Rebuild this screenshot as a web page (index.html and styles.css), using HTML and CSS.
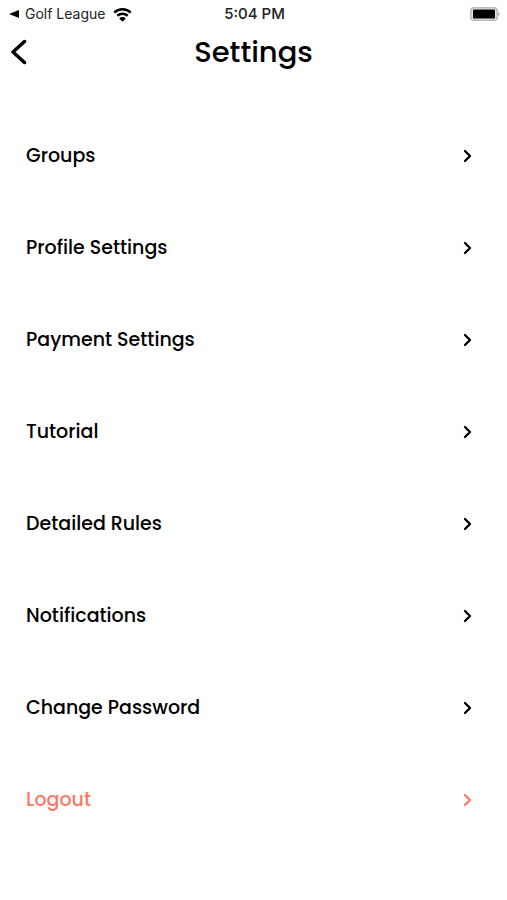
FILE: index.html
```
<!DOCTYPE html>
<html lang="en">
<head>
  <meta charset="utf-8">
  <meta name="viewport" content="width=device-width, initial-scale=1">
  <title>Settings</title>
  <link rel="stylesheet" href="styles.css">
</head>
<body>
  <div class="status-bar">
    <div class="status-left">
      <a class="back-to-app" href="#">
        <svg class="back-triangle" viewBox="0 0 10 8"><path d="M0 4 10 0v8z"/></svg>
        Golf League
      </a>
      <svg class="wifi" viewBox="0 0 18 14">
        <path class="wifi-arc" d="M1.2 5.2a11.2 11.2 0 0 1 15.6 0M4.1 8.2a7 7 0 0 1 9.8 0"/>
        <path d="M9 13.8 5.9 10.7a4.4 4.4 0 0 1 6.2 0z"/>
      </svg>
    </div>
    <div class="status-time">5:04 PM</div>
    <div class="status-right">
      <svg class="battery" viewBox="0 0 30 14">
        <rect class="battery-case" x="0" y="0" width="28" height="14" rx="4"/>
        <rect class="battery-gap" x="1.500" y="1.500" width="25" height="11" rx="3"/>
        <rect x="3" y="2.500" width="22" height="9" rx="1"/>
        <path class="battery-tip" d="M28 5c2 .5 2 3.500 0 4z"/>
      </svg>
    </div>
  </div>

  <header class="header">
    <button class="back-btn" type="button" aria-label="Back">
      <svg class="back-icon" viewBox="0 0 16 26"><path d="M13.500 2.500 2 13l11.500 10.500"/></svg>
    </button>
    <h1 class="title">Settings</h1>
  </header>

  <nav class="settings-list">
    <a class="settings-row" href="#">
      <span>Groups</span>
      <svg class="chevron" viewBox="0 0 9 14"><path d="m2 2 5 5-5 5"/></svg>
    </a>
    <a class="settings-row" href="#">
      <span>Profile Settings</span>
      <svg class="chevron" viewBox="0 0 9 14"><path d="m2 2 5 5-5 5"/></svg>
    </a>
    <a class="settings-row" href="#">
      <span>Payment Settings</span>
      <svg class="chevron" viewBox="0 0 9 14"><path d="m2 2 5 5-5 5"/></svg>
    </a>
    <a class="settings-row" href="#">
      <span>Tutorial</span>
      <svg class="chevron" viewBox="0 0 9 14"><path d="m2 2 5 5-5 5"/></svg>
    </a>
    <a class="settings-row" href="#">
      <span>Detailed Rules</span>
      <svg class="chevron" viewBox="0 0 9 14"><path d="m2 2 5 5-5 5"/></svg>
    </a>
    <a class="settings-row" href="#">
      <span>Notifications</span>
      <svg class="chevron" viewBox="0 0 9 14"><path d="m2 2 5 5-5 5"/></svg>
    </a>
    <a class="settings-row" href="#">
      <span>Change Password</span>
      <svg class="chevron" viewBox="0 0 9 14"><path d="m2 2 5 5-5 5"/></svg>
    </a>
    <a class="settings-row logout" href="#">
      <span>Logout</span>
      <svg class="chevron" viewBox="0 0 9 14"><path d="m2 2 5 5-5 5"/></svg>
    </a>
  </nav>
</body>
</html>
```

FILE: styles.css
```
* {
  margin: 0;
  padding: 0;
  box-sizing: border-box;
}

body {
  background: #fff;
  color: #000;
  font-family: 'Poppins', 'Inter', sans-serif;
  font-weight: 500;
}

a {
  color: inherit;
  text-decoration: none;
}

/* Status bar */
.status-bar {
  display: grid;
  grid-template-columns: 1fr auto 1fr;
  align-items: center;
  height: 28px;
  padding: 0 7px 0 9px;
  font-family: 'Inter', sans-serif;
  font-size: 14px;
  line-height: 20px;
}

.status-left {
  display: flex;
  align-items: center;
  gap: 8px;
}

.back-to-app {
  display: flex;
  align-items: center;
  gap: 6px;
  color: #222;
  font-weight: 400;
}

.back-triangle {
  width: 10px;
  height: 8px;
}

.wifi {
  width: 19px;
  height: 15px;
}

.wifi-arc {
  fill: none;
  stroke: #000;
  stroke-width: 2.4;
}

.status-time {
  color: #222;
  font-size: 15px;
  font-weight: 500;
}

.status-right {
  display: flex;
  justify-content: flex-end;
}

.battery {
  width: 30px;
  height: 14px;
}

.battery-case,
.battery-tip {
  fill: #bbb;
}

.battery-gap {
  fill: #e4e4e4;
}

/* Header */
.header {
  display: grid;
  grid-template-columns: 1fr auto 1fr;
  align-items: center;
  height: 48px;
  padding: 0 11px;
}

.back-btn {
  display: flex;
  align-items: center;
  justify-self: start;
  height: 48px;
  border: none;
  background: none;
  cursor: pointer;
}

.back-icon {
  width: 16px;
  height: 26px;
  fill: none;
  stroke: #000;
  stroke-width: 3.5;
  stroke-linecap: round;
  stroke-linejoin: round;
}

.title {
  font-size: 29px;
  font-weight: 500;
  line-height: 40px;
}

/* Settings list */
.settings-list {
  padding: 34px 35px 34px 26px;
}

.settings-row {
  display: flex;
  align-items: center;
  justify-content: space-between;
  height: 92px;
  font-size: 19px;
  line-height: 28px;
}

.chevron {
  width: 9px;
  height: 14px;
  fill: none;
  stroke: currentColor;
  stroke-width: 2.3;
  stroke-linecap: round;
  stroke-linejoin: round;
}

.logout {
  color: #fb7866;
}
```
